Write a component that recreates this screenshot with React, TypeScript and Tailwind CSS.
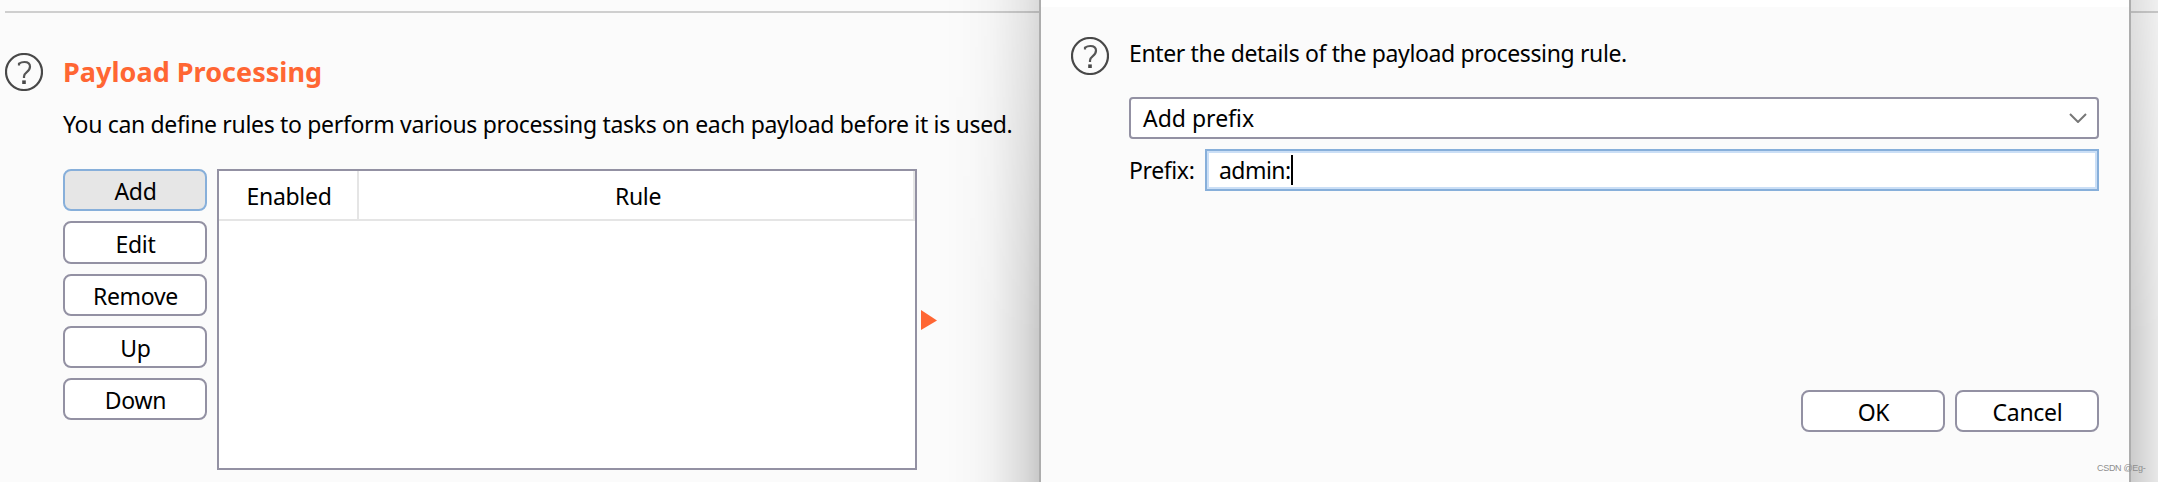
import React from "react";

function HelpIcon() {
  return (
    <svg width="38" height="38" viewBox="0 0 38 38" fill="none" className="block shrink-0" stroke="#484848">
      <circle cx="19" cy="19" r="18" strokeWidth="2.2" />
      <path d="M14 12.4 V10.6 C15.6 9.5 17.4 9 19.4 9 C23 9 25 10.8 25 13.6 C25 16.2 23.8 17.6 21.8 19.1 C20 20.5 19 21.6 19 23.6 V25" strokeWidth="2.2" stroke="#555" />
      <path d="M19 27.4 V31" strokeWidth="3.6" />
    </svg>
  );
}

function Button({ label, active = false, tall = false }: { label: string; active?: boolean; tall?: boolean }) {
  const height = tall ? "h-[43px]" : "h-[42px]";
  const look = active ? "border-[#87afda] bg-[#e6e6e6]" : "border-[#9391a3] bg-white";
  return (
    <button className={`flex w-36 shrink-0 items-center justify-center rounded-lg border-2 pl-px pt-0.5 tracking-[-0.3px] ${height} ${look}`}>
      {label}
    </button>
  );
}

export default function App() {
  return (
    <div className="relative flex h-[482px] w-[2158px] overflow-hidden bg-[#fbfbfb] font-['Noto_Sans','Open_Sans',sans-serif] text-[23px] leading-8 text-black">
      <main className="flex w-full flex-col pl-[5px] pt-[11px]">
        <div className="h-0.5 shrink-0 bg-[#cfcfcf]" />
        <div className="flex gap-5 pt-10">
          <HelpIcon />
          <section className="flex flex-col">
            <h1 className="flex h-[38px] items-center text-[27px] font-bold tracking-[0.03px] text-[#ff6633]"><span>Payload Processing</span></h1>
            <p className="mt-[17px] whitespace-nowrap tracking-[-0.325px]"><span>You can define rules to perform various processing tasks on each payload before it is used.</span></p>
            <div className="mt-[29px] flex">
              <div className="flex flex-col gap-2.5">
                <Button label="Add" active />
                <Button label="Edit" tall />
                <Button label="Remove" />
                <Button label="Up" />
                <Button label="Down" />
              </div>
              <div className="ml-2.5 h-[301px] w-[700px] border-2 border-[#9391a3] bg-white">
                <div className="flex h-[50px] border-b-2 border-[#e5e5e5] tracking-[-0.3px]">
                  <div className="flex w-[140px] items-center justify-center border-r-2 border-[#e5e5e5] pl-0.5 pt-0.5">Enabled</div>
                  <div className="flex flex-1 items-center justify-center border-r-2 border-[#e5e5e5] pl-1 pt-0.5">Rule</div>
                </div>
              </div>
              <svg width="16" height="20" viewBox="0 0 16 20" className="ml-1 mt-[141px]">
                <path d="M0 0 L16 10.5 L0 20 Z" fill="#ff6633" />
              </svg>
            </div>
          </section>
        </div>
      </main>

      <div className="absolute left-[945px] top-0 h-[482px] w-[94px] bg-[linear-gradient(to_right,transparent,rgb(0_0_0/0.015)_30%,rgb(0_0_0/0.04)_50%,rgb(0_0_0/0.085)_69%,rgb(0_0_0/0.13)_85%,rgb(0_0_0/0.195))] mask-[linear-gradient(to_bottom,rgb(0_0_0/0.65),black_70%)]" />
      <div className="absolute left-[2131px] top-0 h-[482px] w-[27px] bg-[linear-gradient(to_right,rgb(0_0_0/0.18),rgb(0_0_0/0.08))] mask-[linear-gradient(to_bottom,rgb(0_0_0/0.6),black_70%)]" />

      <div className="absolute left-[1039px] top-0 flex h-[482px] w-[1092px] flex-col border-x-2 border-[#adadad] bg-[#fbfbfb]">
        <div className="h-[7px] shrink-0 bg-white" />
        <div className="flex gap-5 pl-[30px] pr-[30px] pt-[30px]">
          <HelpIcon />
          <div className="flex flex-1 flex-col">
            <p className="tracking-[-0.36px]"><span>Enter the details of the payload processing rule.</span></p>
            <div className="mt-7 flex h-[42px] items-center justify-between rounded-[4px] border-2 border-[#9391a3] bg-white pl-3 pr-2.5">
              <span>Add prefix</span>
              <svg width="18" height="10" viewBox="0 0 18 10" fill="none" stroke="#777" strokeWidth="2"><path d="M1 1 L9 9 L17 1" /></svg>
            </div>
            <div className="mt-2.5 flex h-[42px]">
              <div className="flex w-[76px] items-center tracking-[-0.38px]">Prefix:</div>
              <div className="flex flex-1 items-center border-2 border-[#87afda] bg-white pl-3 inset-ring-2 inset-ring-[#cbdff6]">
                <span className="tracking-[-0.55px]">admin:</span><span className="h-[30px] w-0.5 bg-black" />
              </div>
            </div>
            <div className="mt-[199px] flex justify-end gap-2.5">
              <Button label="OK" />
              <Button label="Cancel" />
            </div>
          </div>
        </div>
      </div>
      <div className="absolute left-[2097px] top-[460px] whitespace-nowrap font-['Liberation_Sans',sans-serif] text-[9px] leading-4 tracking-[-0.3px] text-[#8e8e8e]">CSDN @Eg-</div>
    </div>
  );
}
